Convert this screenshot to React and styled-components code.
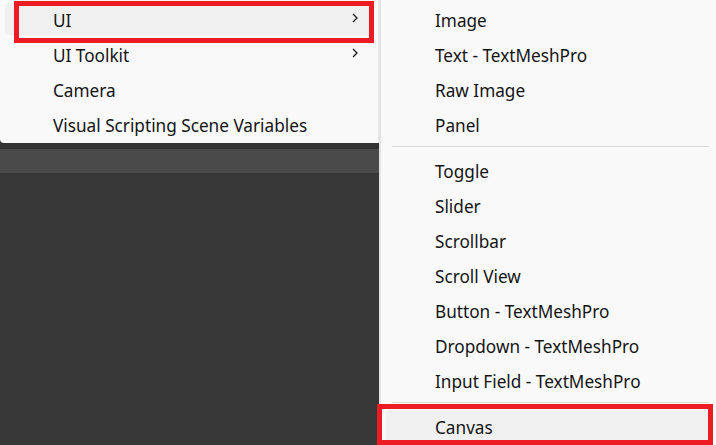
import React from 'react';
import styled, { createGlobalStyle } from 'styled-components';

const leftItems = [
    { label: 'UI', sub: true, active: true },
    { label: 'UI Toolkit', sub: true },
    { label: 'Camera' },
    { label: 'Visual Scripting Scene Variables' },
];

const subGroups = [
    ['Image', 'Text - TextMeshPro', 'Raw Image', 'Panel'],
    ['Toggle', 'Slider', 'Scrollbar', 'Scroll View', 'Button - TextMeshPro', 'Dropdown - TextMeshPro', 'Input Field - TextMeshPro'],
    ['Canvas'],
];

function Chevron() {
    return (
        <ChevronSvg width="8" height="10" viewBox="0 0 8 10">
            <polyline points="2,1 6,5 2,9" fill="none" stroke="#1b1b1b" strokeWidth="1.3" />
        </ChevronSvg>
    );
}

function App() {
    return (
        <>
            <GlobalStyle />
            <Stage>
                <LeftColumn>
                    <Menu>
                        {leftItems.map((item) => (
                            <Row key={item.label} active={item.active} indent="48">
                                <Label>{item.label}</Label>
                                {item.sub && <Chevron />}
                            </Row>
                        ))}
                    </Menu>
                    <DarkStrip />
                    <DarkBand />
                </LeftColumn>
                <SubMenu>
                    {subGroups.map((group, gi) => (
                        <React.Fragment key={gi}>
                            {gi > 0 && <Separator />}
                            {group.map((label) => (
                                <Row key={label} indent="49" active={label === 'Canvas'}>
                                    <Label>{label}</Label>
                                </Row>
                            ))}
                        </React.Fragment>
                    ))}
                </SubMenu>
                <Callout left={14} top={1} width={360} height={42} />
                <Callout left={377} top={404} width={336} height={41} />
            </Stage>
        </>
    );
}

const GlobalStyle = createGlobalStyle`
    body {
        margin: 0;
        background: #383838;
        font-family: 'Noto Sans', 'Open Sans', sans-serif;
    }
`;
const Stage = styled.div`
    position: relative;
    display: flex;
    width: 716px;
    height: 445px;
    overflow: hidden;
    background: #383838;
`;
const LeftColumn = styled.div`
    display: flex;
    flex-direction: column;
    width: 379px;
`;
const Menu = styled.div`
    display: flex;
    flex-direction: column;
    background: #f9f9f9;
    padding-top: 3px;
    height: 140px;
    border-right: 1px solid #e6e6e6;
    border-bottom-left-radius: 4px;
    box-shadow: 0 1px 2px rgba(0, 0, 0, 0.25);
`;
const DarkStrip = styled.div`
    height: 6px;
    background: #333333;
`;
const DarkBand = styled.div`
    height: 24px;
    background: #4a4a4a;
`;
const SubMenu = styled.div`
    flex: 1;
    display: flex;
    flex-direction: column;
    background: #f9f9f9;
    border-left: 2px solid #e3e3e3;
    padding-top: 3px;
`;
const Row = styled.div`
    display: flex;
    flex-shrink: 0;
    align-items: center;
    height: 32px;
    margin: 0 6px 3px 5px;
    padding-left: ${props => props.indent}px;
    padding-right: 10px;
    border-radius: 4px;
    background: ${props => props.active ? '#f0f0f0' : 'transparent'};
`;
const Label = styled.span`
    flex: 1;
    padding-top: 3px;
    font-size: 17.2px;
    color: #141414;
    white-space: nowrap;
`;
const ChevronSvg = styled.svg`
    display: block;
    margin-right: 3px;
    margin-top: -3px;
`;
const Separator = styled.div`
    flex-shrink: 0;
    height: 1px;
    background: #d9d9d9;
    margin: 3px 7px 7px 11px;
`;
const Callout = styled.div`
    position: absolute;
    left: ${props => props.left}px;
    top: ${props => props.top}px;
    width: ${props => props.width}px;
    height: ${props => props.height}px;
    box-sizing: border-box;
    border: 5px solid #ed1c24;
    pointer-events: none;
`;

export default App;
